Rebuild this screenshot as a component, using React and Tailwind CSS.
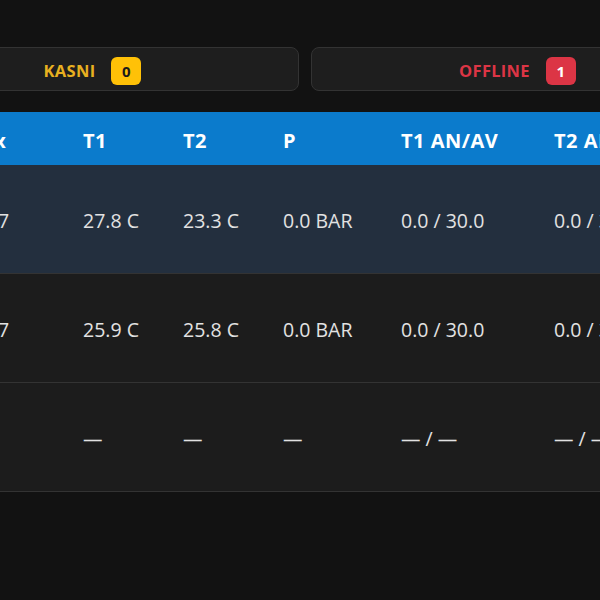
import React from "react";

const cols = "grid grid-cols-[135px_100px_100px_118px_153px_170px]";

const rows = [
  { id: "ST-107", t1: "27.8 C", t2: "23.3 C", p: "0.0 BAR", a1: "0.0 / 30.0", a2: "0.0 / 30.0", active: true },
  { id: "ST-107", t1: "25.9 C", t2: "25.8 C", p: "0.0 BAR", a1: "0.0 / 30.0", a2: "0.0 / 30.0" },
  { id: "", t1: "—", t2: "—", p: "—", a1: "— / —", a2: "— / —" },
];

function StatusCard({ label, count, text, badge }) {
  return (
    <div className="w-[413px] h-[44px] shrink-0 rounded-lg border border-[#333333] bg-[#1e1e1e] flex items-center justify-center gap-4 pt-1">
      <span className={`text-[16.5px] font-bold tracking-[0.3px] ${text}`}>{label}</span>
      <span className={`w-[30px] h-[28px] rounded-md flex items-center justify-center text-[15px] font-bold ${badge}`}>
        {count}
      </span>
    </div>
  );
}

export default function App() {
  return (
    <div
      className="w-[600px] h-[600px] overflow-hidden bg-[#121212]"
      style={{ fontFamily: '"Open Sans", "Noto Sans", sans-serif' }}
    >
      <div className="pt-[47px] flex gap-3 ml-[-114px]">
        <StatusCard label="KASNI" count="0" text="text-[#e8b020]" badge="bg-[#ffc107] text-[#1a1a1a]" />
        <StatusCard label="OFFLINE" count="1" text="text-[#dc3545]" badge="bg-[#dc3545] text-white" />
      </div>

      <div className="mt-[21px] ml-[-68px] w-[900px]">
        <div className={`${cols} h-[53px] items-center bg-[#0b7bcc] text-white font-bold text-[20px] tracking-[0.5px] pt-1`}>
          <div className="pl-4">Index</div>
          <div className="pl-4">T1</div>
          <div className="pl-4">T2</div>
          <div className="pl-4">P</div>
          <div className="pl-4 whitespace-nowrap">T1 AN/AV</div>
          <div className="pl-4 whitespace-nowrap">T2 AN/AV</div>
        </div>
        {rows.map((r, i) => (
          <div
            key={i}
            className={`${cols} h-[109px] items-center text-[19.5px] text-[#e2e2e2] border-b border-[#333333] pt-1 ${
              r.active ? "bg-[#232f3e]" : "bg-[#1c1c1c]"
            }`}
          >
            <div className="pl-4 whitespace-nowrap">{r.id}</div>
            <div className="pl-4 whitespace-nowrap">{r.t1}</div>
            <div className="pl-4 whitespace-nowrap">{r.t2}</div>
            <div className="pl-4 whitespace-nowrap">{r.p}</div>
            <div className="pl-4 whitespace-nowrap">{r.a1}</div>
            <div className="pl-4 whitespace-nowrap">{r.a2}</div>
          </div>
        ))}
      </div>
    </div>
  );
}
